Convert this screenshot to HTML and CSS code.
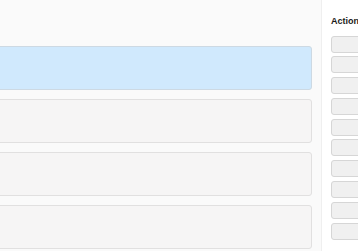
FILE: index.html
```html
<!DOCTYPE html>
<html>
<head>
<meta charset="utf-8">
<link rel="stylesheet" href="styles.css">
</head>
<body>
<div class="layout">
  <div class="main">
    <div class="card card-active"></div>
    <div class="card"></div>
    <div class="card"></div>
    <div class="card"></div>
  </div>
  <div class="sidebar">
    <div class="sidebar-title">Actions</div>
    <div class="actions">
      <div class="action-btn"></div>
      <div class="action-btn"></div>
      <div class="action-btn"></div>
      <div class="action-btn"></div>
      <div class="action-btn"></div>
      <div class="action-btn"></div>
      <div class="action-btn"></div>
      <div class="action-btn"></div>
      <div class="action-btn"></div>
      <div class="action-btn"></div>
    </div>
  </div>
</div>
</body>
</html>
```

FILE: styles.css
```css
html, body {
  margin: 0;
  padding: 0;
  width: 358px;
  height: 251px;
  overflow: hidden;
  font-family: "Liberation Sans", Arial, sans-serif;
}
.layout {
  display: flex;
  height: 251px;
  width: 400px;
}
.main {
  width: 321px;
  flex: none;
  box-sizing: border-box;
  background: #fafafa;
  padding: 46px 9px 0 0;
  display: flex;
  flex-direction: column;
  gap: 9px;
}
.card {
  margin-left: -10px;
  height: 44px;
  box-sizing: border-box;
  background: #f6f5f5;
  border: 1px solid #e1e0e0;
  border-radius: 3px;
}
.card-active {
  background: #d0e9fd;
  border-color: #cdd9e3;
}
.sidebar {
  flex: none;
  width: 79px;
  box-sizing: border-box;
  background: #ffffff;
  border-left: 1px solid #efefef;
  padding: 15.5px 0 0 9px;
}
.sidebar-title {
  font-size: 9px;
  font-weight: bold;
  color: #1a1a1a;
  line-height: 10px;
  white-space: nowrap;
  margin-bottom: 10px;
}
.actions {
  display: flex;
  flex-direction: column;
  gap: 3.8px;
}
.action-btn {
  height: 17px;
  box-sizing: border-box;
  background: #f0f0f0;
  border: 1px solid #d6d6d6;
  border-radius: 3px;
}
```
